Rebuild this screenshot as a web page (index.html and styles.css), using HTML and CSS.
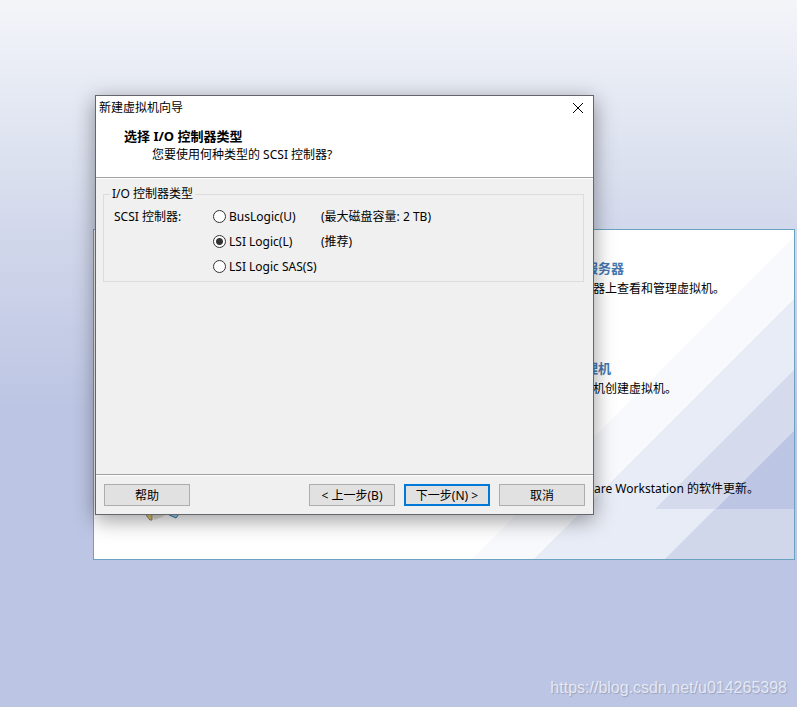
FILE: index.html
```html
<!DOCTYPE html>
<html lang="zh-CN">
<head>
    <meta charset="UTF-8">
    <meta name="viewport" content="width=device-width, initial-scale=1.0">
    <title>新建虚拟机向导</title>
    <link rel="stylesheet" href="styles.css">
</head>
<body>
    <main class="home">
        <svg class="stripes" viewBox="0 0 322 322" aria-hidden="true">
            <path fill="#f7f9fd" d="M322 0L0 322H322Z"/>
            <path fill="#e8ecf6" d="M322 62L62 322H322Z"/>
            <path fill="#d5daed" d="M322 133L183 272H322Z"/>
            <path fill="#bcc5e3" d="M322 194L244 272H322Z"/>
            <path fill="#d1d7eb" d="M243 272L193 322H322V272Z"/>
        </svg>
        <section class="task">
            <h2>服务器</h2>
            <p>器上查看和管理虚拟机。</p>
        </section>
        <section class="task">
            <h2>理机</h2>
            <p>机创建虚拟机。</p>
        </section>
        <section class="task update">
            <svg class="update-icon" viewBox="0 0 40 50" aria-hidden="true">
                <path fill="#9a8a78" opacity=".3" d="M8 34H26L18 39L10 42Z"/>
                <path fill="#e2c765" stroke="#8b8266" d="M-1 33L6 42H8V33Z"/>
                <path fill="#a9d3ee" stroke="#2478b4" d="M19 34L32 40L37 33"/>
            </svg>
            <p>are Workstation 的软件更新。</p>
        </section>
    </main>

    <form class="dialog">
        <header class="dialog-header">
            <div class="titlebar">
                <span>新建虚拟机向导</span>
                <button type="button" class="close" aria-label="关闭">
                    <svg viewBox="0 0 12 12"><path d="M1 1L11 11M11 1L1 11"/></svg>
                </button>
            </div>
            <h1>选择 I/O 控制器类型</h1>
            <p>您要使用何种类型的 SCSI 控制器?</p>
        </header>

        <div class="dialog-body">
            <fieldset>
                <legend>I/O 控制器类型</legend>
                <div class="options">
                    <span class="caption">SCSI 控制器:</span>
                    <label><input type="radio" name="controller" value="buslogic">BusLogic(U)</label>
                    <span>(最大磁盘容量: 2 TB)</span>
                    <label><input type="radio" name="controller" value="lsi" checked>LSI Logic(L)</label>
                    <span>(推荐)</span>
                    <label><input type="radio" name="controller" value="sas">LSI Logic SAS(S)</label>
                </div>
            </fieldset>
        </div>

        <footer class="dialog-footer">
            <button type="button" class="btn help">帮助</button>
            <button type="button" class="btn">&lt; 上一步(B)</button>
            <button type="button" class="btn primary">下一步(N) &gt;</button>
            <button type="button" class="btn">取消</button>
        </footer>
    </form>

    <div class="watermark">https://blog.csdn.net/u014265398</div>
</body>
</html>
```

FILE: styles.css
```css
* {
    box-sizing: border-box;
}

body {
    display: flex;
    flex-direction: column;
    min-height: 100vh;
    margin: 0;
    padding: 229px 2px 8px 93px;
    background: linear-gradient(#f3f5f9 0, #e6eaf4 90px, #d2d8eb 230px, #bcc5e3 410px) #bcc5e3 no-repeat;
    color: #000;
    font-family: "Noto Sans", "Noto Sans CJK SC", sans-serif;
    font-size: 12px;
    line-height: 20px;
    position: relative;
}

h1, h2, p {
    margin: 0;
}

/* home page behind the wizard */
.home {
    position: relative;
    padding: 28px 0 1px;
    border: 1px solid #6ba2c2;
    background: #fff;
}

.stripes {
    position: absolute;
    right: 0;
    bottom: 0;
    width: 322px;
    height: 322px;
}

.task {
    position: relative;
    height: 100px;
    padding-left: 491px;
}

.task h2 {
    color: #4677ae;
    font-size: 13px;
    line-height: 20px;
}

.task p {
    padding-left: 8px;
    line-height: 22px;
}

.update {
    display: flex;
    padding: 20px 0 0 50px;
}

.update-icon {
    width: 40px;
    height: 50px;
}

.update p {
    padding-left: 410px;
}

/* wizard window */
.dialog {
    position: absolute;
    top: 95px;
    left: 95px;
    display: flex;
    flex-direction: column;
    width: min(499px, 100% - 110px);
    border: 1px solid #65666c;
    background: #f0f0f0;
    box-shadow: 0 5px 20px rgba(0, 0, 0, 0.4);
}

.dialog-header {
    padding-bottom: 13px;
    border-bottom: 1px solid #a0a0a0;
    background: #fff;
}

.titlebar {
    display: flex;
    justify-content: space-between;
    align-items: center;
    height: 24px;
    padding: 0 9px 0 3px;
}

.close {
    display: flex;
    padding: 0;
    border: 0;
    background: none;
}

.close svg {
    width: 12px;
    height: 12px;
    fill: none;
    stroke: #000;
}

.dialog-header h1 {
    padding: 6px 28px 0;
    font-size: 13px;
    line-height: 20px;
}

.dialog-header p {
    padding: 0 56px;
    line-height: 18px;
}

.dialog-body {
    min-height: 296px;
    padding: 6px 9px 0 7px;
    border-top: 1px solid #fff;
}

fieldset {
    margin: 0;
    padding: 1px 10px 2px;
    border: 1px solid #dcdcdc;
}

legend {
    margin-left: -4px;
    padding: 0 2px;
    line-height: 18px;
}

.options {
    display: grid;
    grid-template-columns: 99px 108px 1fr;
    grid-auto-rows: 25px;
    align-items: center;
}

.options label {
    grid-column: 2;
    display: flex;
    align-items: center;
    gap: 3px;
    white-space: nowrap;
}

input[type="radio"] {
    appearance: none;
    flex: none;
    width: 13px;
    height: 13px;
    margin: 0;
    border: 1px solid #333;
    border-radius: 50%;
    background: #fff;
}

input[type="radio"]:checked {
    background: radial-gradient(circle, #333 3px, #fff 4px);
}

.dialog-footer {
    display: flex;
    gap: 9px;
    padding: 9px 8px 8px;
    border-top: 1px solid #a0a0a0;
    box-shadow: inset 0 1px #fff;
}

.btn {
    width: 86px;
    height: 22px;
    padding: 2px 0 0;
    border: 1px solid #adadad;
    background: #e1e1e1;
    color: #000;
    font: inherit;
    line-height: 18px;
}

.help {
    margin-right: auto;
}

.primary {
    padding-top: 1px;
    border: 2px solid #0078d7;
}

.watermark {
    margin-top: auto;
    padding-right: 8px;
    color: rgba(255, 255, 255, 0.7);
    font-family: "Liberation Sans", Arial, sans-serif;
    font-size: 16px;
    line-height: 22px;
    text-align: right;
    text-shadow: 1px 1px 1px rgba(90, 100, 130, 0.35);
}
```
